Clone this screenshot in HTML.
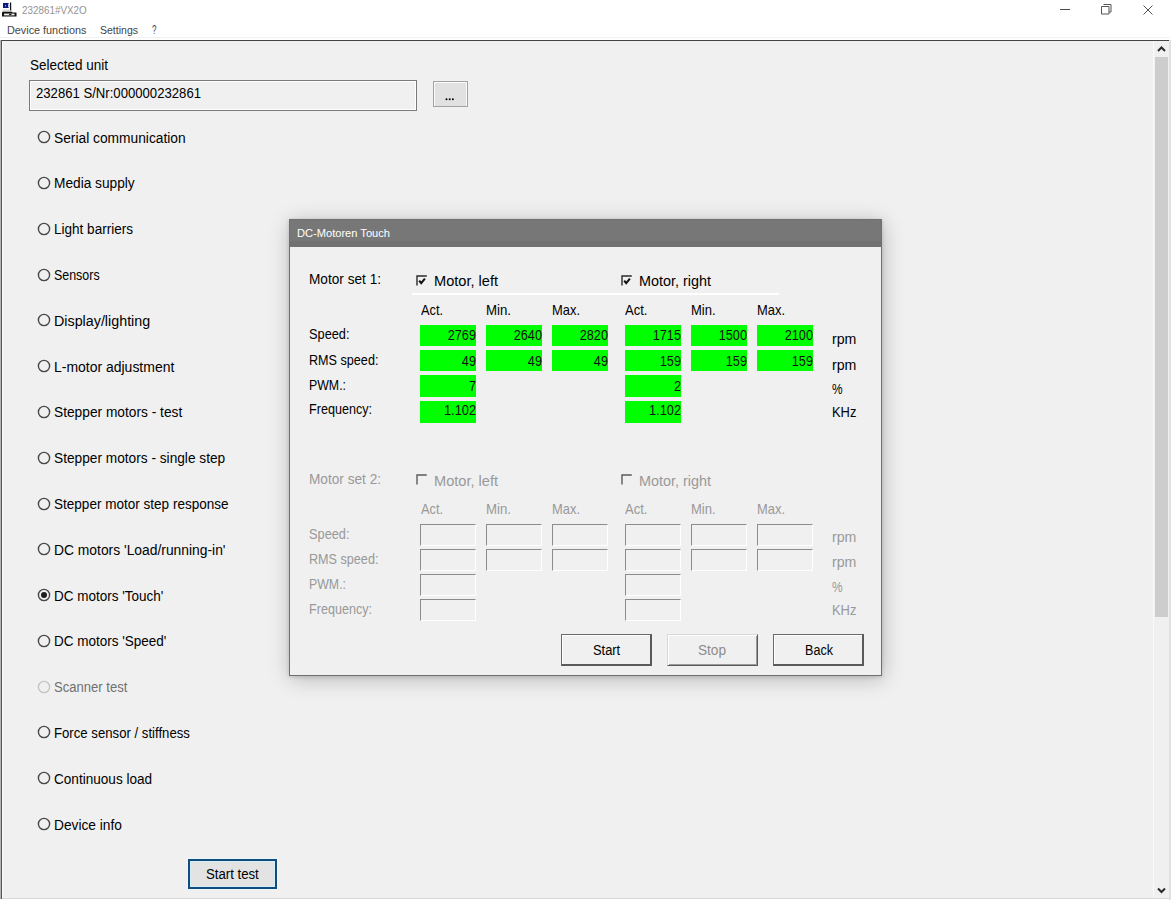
<!DOCTYPE html>
<html><head><meta charset="utf-8">
<style>
html,body{margin:0;padding:0;width:1171px;height:900px;overflow:hidden;background:#fff;}
body{position:relative;font-family:"Liberation Sans",sans-serif;}
.t{position:absolute;white-space:nowrap;display:block;}
.a{position:absolute;box-sizing:border-box;}
</style></head><body>
<!-- title bar -->
<svg class="a" style="left:0px;top:0px" width="20" height="20" viewBox="0 0 20 20">
  <rect x="3" y="3" width="6" height="5" fill="#0b1a7a"/>
  <rect x="5" y="5" width="1" height="1.5" fill="#8a96e0"/>
  <rect x="8" y="3.5" width="1.5" height="4" fill="#b8c0f0"/>
  <rect x="10" y="2.5" width="1.2" height="9" fill="#111"/>
  <path d="M2.5 9.5L10 9.5L11.5 12L2.5 12Z" fill="#d8d8d0"/>
  <rect x="2.3" y="11.8" width="10" height="1.2" fill="#111"/>
  <rect x="2" y="12.5" width="14.5" height="4" fill="#111"/>
  <rect x="4" y="13.6" width="10.5" height="1.8" fill="#f2f2f2"/>
  <rect x="9" y="13.8" width="2.5" height="1.3" fill="#222"/>
</svg>
<svg class="a" style="left:1059px;top:4px" width="16" height="12"><line x1="1" y1="5.5" x2="11" y2="5.5" stroke="#4a4a4a" stroke-width="1"/></svg>
<svg class="a" style="left:1101px;top:4px" width="12" height="12"><path d="M2.5 0.5h7.5v7.5h-2 M0.5 2.5h7.5v7.5h-7.5z" fill="none" stroke="#555" stroke-width="1"/></svg>
<svg class="a" style="left:1143px;top:4.5px" width="10" height="10"><path d="M0.5 0.5L9.5 9.5M9.5 0.5L0.5 9.5" stroke="#555" stroke-width="1"/></svg>

<!-- client -->
<div class="a" style="left:0;top:40px;width:1171px;height:860px;background:#f0f0f0;"></div>
<div class="a" style="left:0;top:40px;width:1170px;height:1px;background:#444;"></div><div class="a" style="left:0;top:37px;width:1170px;height:1px;background:#f2f2f2;"></div>
<div class="a" style="left:1px;top:40px;width:1px;height:859px;background:#555;"></div><div class="a" style="left:0px;top:40px;width:1px;height:859px;background:#b4b4b4;"></div><div class="a" style="left:2px;top:41px;width:1px;height:857px;background:#fbfbfb;"></div>
<div class="a" style="left:2px;top:898px;width:1167px;height:1px;background:#d9d9d9;"></div><div class="a" style="left:0;top:899px;width:1171px;height:1px;background:#fff;"></div>
<div class="a" style="left:1169px;top:40px;width:2px;height:860px;background:#e0e0e0;"></div>
<!-- scrollbar -->
<div class="a" style="left:1153px;top:41px;width:1px;height:856px;background:#fafafa;"></div>

<div class="a" style="left:1155px;top:57px;width:13px;height:560px;background:#cdcdcd;"></div>
<svg class="a" style="left:1157px;top:45px" width="9" height="8"><path d="M1 6L4.5 2.5L8 6" fill="none" stroke="#2a2a2a" stroke-width="2"/></svg>
<svg class="a" style="left:1157px;top:886px" width="9" height="8"><path d="M1 2.5L4.5 6L8 2.5" fill="none" stroke="#2a2a2a" stroke-width="2"/></svg>

<!-- selected unit textbox -->
<div class="a" style="left:29px;top:80px;width:388px;height:31px;border:1px solid #7a7a7a;background:#f0f0f0;box-shadow:inset 1px 1px 0 #fff,inset -1px -1px 0 #fff;"></div>
<div class="a" style="left:433px;top:81px;width:35px;height:26px;border:1px solid #a2a2a2;background:#e1e1e1;box-shadow:inset 1px 1px 0 #fbfbfb,inset -1px 0 0 #fbfbfb;"></div>
<svg class="a" style="left:444px;top:96px" width="12" height="6"><circle cx="2.5" cy="3.2" r="1" fill="#000"/><circle cx="5.7" cy="3.2" r="1" fill="#000"/><circle cx="8.9" cy="3.2" r="1" fill="#000"/></svg>

<!-- radios -->
<svg class="a" style="left:37.4px;top:130.3px" width="14" height="14"><circle cx="7" cy="7" r="5.6" fill="none" stroke="#484848" stroke-width="1.4"/></svg>
<svg class="a" style="left:37.4px;top:176.1px" width="14" height="14"><circle cx="7" cy="7" r="5.6" fill="none" stroke="#484848" stroke-width="1.4"/></svg>
<svg class="a" style="left:37.4px;top:221.8px" width="14" height="14"><circle cx="7" cy="7" r="5.6" fill="none" stroke="#484848" stroke-width="1.4"/></svg>
<svg class="a" style="left:37.4px;top:267.6px" width="14" height="14"><circle cx="7" cy="7" r="5.6" fill="none" stroke="#484848" stroke-width="1.4"/></svg>
<svg class="a" style="left:37.4px;top:313.4px" width="14" height="14"><circle cx="7" cy="7" r="5.6" fill="none" stroke="#484848" stroke-width="1.4"/></svg>
<svg class="a" style="left:37.4px;top:359.2px" width="14" height="14"><circle cx="7" cy="7" r="5.6" fill="none" stroke="#484848" stroke-width="1.4"/></svg>
<svg class="a" style="left:37.4px;top:404.9px" width="14" height="14"><circle cx="7" cy="7" r="5.6" fill="none" stroke="#484848" stroke-width="1.4"/></svg>
<svg class="a" style="left:37.4px;top:450.7px" width="14" height="14"><circle cx="7" cy="7" r="5.6" fill="none" stroke="#484848" stroke-width="1.4"/></svg>
<svg class="a" style="left:37.4px;top:496.5px" width="14" height="14"><circle cx="7" cy="7" r="5.6" fill="none" stroke="#484848" stroke-width="1.4"/></svg>
<svg class="a" style="left:37.4px;top:542.2px" width="14" height="14"><circle cx="7" cy="7" r="5.6" fill="none" stroke="#484848" stroke-width="1.4"/></svg>
<svg class="a" style="left:37.4px;top:588.0px" width="14" height="14"><circle cx="7" cy="7" r="5.6" fill="none" stroke="#484848" stroke-width="1.4"/><circle cx="7" cy="7" r="3" fill="#1e1e1e"/></svg>
<svg class="a" style="left:37.4px;top:633.8px" width="14" height="14"><circle cx="7" cy="7" r="5.6" fill="none" stroke="#484848" stroke-width="1.4"/></svg>
<svg class="a" style="left:37.4px;top:679.5px" width="14" height="14"><circle cx="7" cy="7" r="5.6" fill="none" stroke="#c4c4c4" stroke-width="1.4"/></svg>
<svg class="a" style="left:37.4px;top:725.3px" width="14" height="14"><circle cx="7" cy="7" r="5.6" fill="none" stroke="#484848" stroke-width="1.4"/></svg>
<svg class="a" style="left:37.4px;top:771.1px" width="14" height="14"><circle cx="7" cy="7" r="5.6" fill="none" stroke="#484848" stroke-width="1.4"/></svg>
<svg class="a" style="left:37.4px;top:816.9px" width="14" height="14"><circle cx="7" cy="7" r="5.6" fill="none" stroke="#484848" stroke-width="1.4"/></svg>

<!-- start test button -->
<div class="a" style="left:188px;top:859px;width:89px;height:30px;border:2px solid #124b7c;background:#e3e3e3;box-shadow:inset 0 0 0 1px #d2f0fc,0 0 0 1px #e8f8ff;"></div>

<!-- dialog shadow -->
<div class="a" style="left:289px;top:219px;width:593px;height:457px;box-shadow:0 1px 4px rgba(0,0,0,0.15),1px 3px 20px rgba(0,0,0,0.23);"></div>
<div class="a" style="left:289px;top:219px;width:593px;height:457px;background:#f0f0f0;border:1px solid #707070;"></div>
<div class="a" style="left:290px;top:220px;width:591px;height:27px;background:#777777;"></div><div class="a" style="left:290px;top:241px;width:591px;height:6px;background:#717171;"></div>

<div class="a" style="left:412px;top:293px;width:367px;height:2px;background:#fff;"></div>
<svg class="a" style="left:416px;top:275px" width="12" height="12"><path d="M1 10.5V1H10.8" fill="none" stroke="#2a2a2a" stroke-width="1.4"/><path d="M3.2 5.6L5.2 8.2L8.9 3.6" fill="none" stroke="#111" stroke-width="2"/></svg>
<svg class="a" style="left:621px;top:275px" width="12" height="12"><path d="M1 10.5V1H10.8" fill="none" stroke="#2a2a2a" stroke-width="1.4"/><path d="M3.2 5.6L5.2 8.2L8.9 3.6" fill="none" stroke="#111" stroke-width="2"/></svg>
<div class="a" style="left:420px;top:325px;width:56px;height:21px;background:#00ff00;"></div>
<div class="a" style="left:420px;top:350px;width:56px;height:21px;background:#00ff00;"></div>
<div class="a" style="left:420px;top:375px;width:56px;height:22px;background:#00ff00;"></div>
<div class="a" style="left:420px;top:401px;width:56px;height:21.5px;background:#00ff00;"></div>
<div class="a" style="left:486px;top:325px;width:56px;height:21px;background:#00ff00;"></div>
<div class="a" style="left:486px;top:350px;width:56px;height:21px;background:#00ff00;"></div>
<div class="a" style="left:552px;top:325px;width:56px;height:21px;background:#00ff00;"></div>
<div class="a" style="left:552px;top:350px;width:56px;height:21px;background:#00ff00;"></div>
<div class="a" style="left:625px;top:325px;width:56px;height:21px;background:#00ff00;"></div>
<div class="a" style="left:625px;top:350px;width:56px;height:21px;background:#00ff00;"></div>
<div class="a" style="left:625px;top:375px;width:56px;height:22px;background:#00ff00;"></div>
<div class="a" style="left:625px;top:401px;width:56px;height:21.5px;background:#00ff00;"></div>
<div class="a" style="left:691px;top:325px;width:56px;height:21px;background:#00ff00;"></div>
<div class="a" style="left:691px;top:350px;width:56px;height:21px;background:#00ff00;"></div>
<div class="a" style="left:757px;top:325px;width:56px;height:21px;background:#00ff00;"></div>
<div class="a" style="left:757px;top:350px;width:56px;height:21px;background:#00ff00;"></div>
<svg class="a" style="left:416px;top:473.5px" width="12" height="12"><path d="M1 10.5V1H10.8" fill="none" stroke="#5a5a5a" stroke-width="1.4"/></svg>
<svg class="a" style="left:621px;top:473.5px" width="12" height="12"><path d="M1 10.5V1H10.8" fill="none" stroke="#5a5a5a" stroke-width="1.4"/></svg>
<div class="a" style="left:420px;top:524px;width:56px;height:22px;border-top:1px solid #8c8c8c;border-left:1px solid #8c8c8c;border-right:1px solid #fff;border-bottom:1px solid #fff;"></div>
<div class="a" style="left:420px;top:549px;width:56px;height:22px;border-top:1px solid #8c8c8c;border-left:1px solid #8c8c8c;border-right:1px solid #fff;border-bottom:1px solid #fff;"></div>
<div class="a" style="left:420px;top:574px;width:56px;height:22px;border-top:1px solid #8c8c8c;border-left:1px solid #8c8c8c;border-right:1px solid #fff;border-bottom:1px solid #fff;"></div>
<div class="a" style="left:420px;top:599px;width:56px;height:22px;border-top:1px solid #8c8c8c;border-left:1px solid #8c8c8c;border-right:1px solid #fff;border-bottom:1px solid #fff;"></div>
<div class="a" style="left:486px;top:524px;width:56px;height:22px;border-top:1px solid #8c8c8c;border-left:1px solid #8c8c8c;border-right:1px solid #fff;border-bottom:1px solid #fff;"></div>
<div class="a" style="left:486px;top:549px;width:56px;height:22px;border-top:1px solid #8c8c8c;border-left:1px solid #8c8c8c;border-right:1px solid #fff;border-bottom:1px solid #fff;"></div>
<div class="a" style="left:552px;top:524px;width:56px;height:22px;border-top:1px solid #8c8c8c;border-left:1px solid #8c8c8c;border-right:1px solid #fff;border-bottom:1px solid #fff;"></div>
<div class="a" style="left:552px;top:549px;width:56px;height:22px;border-top:1px solid #8c8c8c;border-left:1px solid #8c8c8c;border-right:1px solid #fff;border-bottom:1px solid #fff;"></div>
<div class="a" style="left:625px;top:524px;width:56px;height:22px;border-top:1px solid #8c8c8c;border-left:1px solid #8c8c8c;border-right:1px solid #fff;border-bottom:1px solid #fff;"></div>
<div class="a" style="left:625px;top:549px;width:56px;height:22px;border-top:1px solid #8c8c8c;border-left:1px solid #8c8c8c;border-right:1px solid #fff;border-bottom:1px solid #fff;"></div>
<div class="a" style="left:625px;top:574px;width:56px;height:22px;border-top:1px solid #8c8c8c;border-left:1px solid #8c8c8c;border-right:1px solid #fff;border-bottom:1px solid #fff;"></div>
<div class="a" style="left:625px;top:599px;width:56px;height:22px;border-top:1px solid #8c8c8c;border-left:1px solid #8c8c8c;border-right:1px solid #fff;border-bottom:1px solid #fff;"></div>
<div class="a" style="left:691px;top:524px;width:56px;height:22px;border-top:1px solid #8c8c8c;border-left:1px solid #8c8c8c;border-right:1px solid #fff;border-bottom:1px solid #fff;"></div>
<div class="a" style="left:691px;top:549px;width:56px;height:22px;border-top:1px solid #8c8c8c;border-left:1px solid #8c8c8c;border-right:1px solid #fff;border-bottom:1px solid #fff;"></div>
<div class="a" style="left:757px;top:524px;width:56px;height:22px;border-top:1px solid #8c8c8c;border-left:1px solid #8c8c8c;border-right:1px solid #fff;border-bottom:1px solid #fff;"></div>
<div class="a" style="left:757px;top:549px;width:56px;height:22px;border-top:1px solid #8c8c8c;border-left:1px solid #8c8c8c;border-right:1px solid #fff;border-bottom:1px solid #fff;"></div>
<div class="a" style="left:561px;top:634px;width:91px;height:32px;background:#f0f0f0;border-top:1px solid #6a6a6a;border-left:1px solid #6a6a6a;border-right:2px solid #5a5a5a;border-bottom:2px solid #5a5a5a;box-shadow:inset 1px 1px 0 #fff;"></div>
<div class="a" style="left:667px;top:634px;width:91px;height:32px;background:#f0f0f0;border-top:1px solid #d8d8d8;border-left:1px solid #d8d8d8;border-right:1px solid #5a5a5a;border-bottom:1px solid #5a5a5a;box-shadow:inset 1px 1px 0 #fff,inset -1px -1px 0 #9a9a9a;"></div>
<div class="a" style="left:773px;top:634px;width:91px;height:32px;background:#f0f0f0;border-top:1px solid #6a6a6a;border-left:1px solid #6a6a6a;border-right:2px solid #5a5a5a;border-bottom:2px solid #5a5a5a;box-shadow:inset 1px 1px 0 #fff;"></div>

<span id="t0" class="t" style="left:21.5px;transform-origin:left center;top:5.33px;font-size:11.3px;line-height:11.3px;color:#939393;transform:scaleX(0.8728);">232861#VX2O</span>
<span id="t1" class="t" style="left:7.3px;transform-origin:left center;top:24.57px;font-size:11.5px;line-height:11.5px;color:#444;transform:scaleX(0.9410);">Device functions</span>
<span id="t2" class="t" style="left:100.2px;transform-origin:left center;top:24.57px;font-size:11.5px;line-height:11.5px;color:#444;transform:scaleX(0.9143);">Settings</span>
<span id="t3" class="t" style="left:151.6px;transform-origin:left center;top:24.14px;font-size:12px;line-height:12px;color:#444;transform:scaleX(0.6729);">?</span>
<span id="t4" class="t" style="left:29.8px;transform-origin:left center;top:57.75px;font-size:14px;line-height:14px;color:#000;transform:scaleX(0.9635);">Selected unit</span>
<span id="t5" class="t" style="left:36.0px;transform-origin:left center;top:85.95px;font-size:14px;line-height:14px;color:#000;transform:scaleX(0.9378);">232861 S/Nr:000000232861</span>
<span id="t6" class="t" style="left:54.3px;transform-origin:left center;top:130.65px;font-size:14px;line-height:14px;color:#000;transform:scaleX(0.9840);">Serial communication</span>
<span id="t7" class="t" style="left:54.3px;transform-origin:left center;top:176.45px;font-size:14px;line-height:14px;color:#000;transform:scaleX(0.9782);">Media supply</span>
<span id="t8" class="t" style="left:54.3px;transform-origin:left center;top:222.25px;font-size:14px;line-height:14px;color:#000;transform:scaleX(0.9669);">Light barriers</span>
<span id="t9" class="t" style="left:54.3px;transform-origin:left center;top:268.05px;font-size:14px;line-height:14px;color:#000;transform:scaleX(0.8879);">Sensors</span>
<span id="t10" class="t" style="left:54.3px;transform-origin:left center;top:313.85px;font-size:14px;line-height:14px;color:#000;transform:scaleX(1.0215);">Display/lighting</span>
<span id="t11" class="t" style="left:54.3px;transform-origin:left center;top:359.65px;font-size:14px;line-height:14px;color:#000;transform:scaleX(0.9974);">L-motor adjustment</span>
<span id="t12" class="t" style="left:54.3px;transform-origin:left center;top:405.45px;font-size:14px;line-height:14px;color:#000;transform:scaleX(0.9807);">Stepper motors - test</span>
<span id="t13" class="t" style="left:54.3px;transform-origin:left center;top:451.25px;font-size:14px;line-height:14px;color:#000;transform:scaleX(0.9778);">Stepper motors - single step</span>
<span id="t14" class="t" style="left:54.3px;transform-origin:left center;top:497.05px;font-size:14px;line-height:14px;color:#000;transform:scaleX(0.9671);">Stepper motor step response</span>
<span id="t15" class="t" style="left:54.3px;transform-origin:left center;top:542.85px;font-size:14px;line-height:14px;color:#000;transform:scaleX(0.9888);">DC motors 'Load/running-in'</span>
<span id="t16" class="t" style="left:54.3px;transform-origin:left center;top:588.65px;font-size:14px;line-height:14px;color:#000;transform:scaleX(0.9630);">DC motors 'Touch'</span>
<span id="t17" class="t" style="left:54.3px;transform-origin:left center;top:634.45px;font-size:14px;line-height:14px;color:#000;transform:scaleX(0.9638);">DC motors 'Speed'</span>
<span id="t18" class="t" style="left:54.3px;transform-origin:left center;top:680.25px;font-size:14px;line-height:14px;color:#707070;transform:scaleX(0.9325);">Scanner test</span>
<span id="t19" class="t" style="left:54.3px;transform-origin:left center;top:726.05px;font-size:14px;line-height:14px;color:#000;transform:scaleX(0.9407);">Force sensor / stiffness</span>
<span id="t20" class="t" style="left:54.3px;transform-origin:left center;top:771.85px;font-size:14px;line-height:14px;color:#000;transform:scaleX(0.9695);">Continuous load</span>
<span id="t21" class="t" style="left:54.3px;transform-origin:left center;top:817.65px;font-size:14px;line-height:14px;color:#000;transform:scaleX(0.9803);">Device info</span>
<span id="t22" class="t" style="left:205.8px;transform-origin:left center;top:867.05px;font-size:14px;line-height:14px;color:#000;transform:scaleX(0.9423);">Start test</span>
<span id="t23" class="t" style="left:297.4px;transform-origin:left center;top:228.43px;font-size:11.3px;line-height:11.3px;color:#fff;transform:scaleX(0.9830);">DC-Motoren Touch</span>
<span id="t24" class="t" style="left:309px;transform-origin:left center;top:272.41px;font-size:14.4px;line-height:14.4px;color:#000;transform:scaleX(0.9476);">Motor set 1:</span>
<span id="t25" class="t" style="left:434.2px;transform-origin:left center;top:273.98px;font-size:14.2px;line-height:14.2px;color:#000;transform:scaleX(1.0273);">Motor, left</span>
<span id="t26" class="t" style="left:638.8px;transform-origin:left center;top:273.98px;font-size:14.2px;line-height:14.2px;color:#000;transform:scaleX(1.0145);">Motor, right</span>
<span id="t27" class="t" style="left:420.5px;transform-origin:left center;top:302.58px;font-size:14.2px;line-height:14.2px;color:#000;transform:scaleX(0.8997);">Act.</span>
<span id="t28" class="t" style="left:486.3px;transform-origin:left center;top:302.58px;font-size:14.2px;line-height:14.2px;color:#000;transform:scaleX(0.9324);">Min.</span>
<span id="t29" class="t" style="left:552.3px;transform-origin:left center;top:302.58px;font-size:14.2px;line-height:14.2px;color:#000;transform:scaleX(0.9106);">Max.</span>
<span id="t30" class="t" style="left:625px;transform-origin:left center;top:302.58px;font-size:14.2px;line-height:14.2px;color:#000;transform:scaleX(0.9201);">Act.</span>
<span id="t31" class="t" style="left:691.2px;transform-origin:left center;top:302.58px;font-size:14.2px;line-height:14.2px;color:#000;transform:scaleX(0.9175);">Min.</span>
<span id="t32" class="t" style="left:756.9px;transform-origin:left center;top:302.58px;font-size:14.2px;line-height:14.2px;color:#000;transform:scaleX(0.9106);">Max.</span>
<span id="t33" class="t" style="left:309px;transform-origin:left center;top:327.48px;font-size:14.2px;line-height:14.2px;color:#000;transform:scaleX(0.9006);">Speed:</span>
<span id="t34" class="t" style="left:309px;transform-origin:left center;top:352.78px;font-size:14.2px;line-height:14.2px;color:#000;transform:scaleX(0.8889);">RMS speed:</span>
<span id="t35" class="t" style="left:309px;transform-origin:left center;top:377.78px;font-size:14.2px;line-height:14.2px;color:#000;transform:scaleX(0.8693);">PWM.:</span>
<span id="t36" class="t" style="left:309px;transform-origin:left center;top:402.28px;font-size:14.2px;line-height:14.2px;color:#000;transform:scaleX(0.8875);">Frequency:</span>
<span id="t37" class="t" style="left:831.5px;transform-origin:left center;top:332.48px;font-size:14.2px;line-height:14.2px;color:#000;transform:scaleX(0.9985);">rpm</span>
<span id="t38" class="t" style="left:831.5px;transform-origin:left center;top:357.98px;font-size:14.2px;line-height:14.2px;color:#000;transform:scaleX(0.9985);">rpm</span>
<span id="t39" class="t" style="left:831.5px;transform-origin:left center;top:381.30px;font-size:15px;line-height:15px;color:#000;transform:scaleX(0.7944);">%</span>
<span id="t40" class="t" style="left:831.5px;transform-origin:left center;top:405.28px;font-size:14.2px;line-height:14.2px;color:#000;transform:scaleX(0.9100);">KHz</span>
<span id="t41" class="t" style="left:309px;transform-origin:left center;top:471.71px;font-size:14.4px;line-height:14.4px;color:#999999;transform:scaleX(0.9476);">Motor set 2:</span>
<span id="t42" class="t" style="left:434.2px;transform-origin:left center;top:473.98px;font-size:14.2px;line-height:14.2px;color:#999999;transform:scaleX(1.0273);">Motor, left</span>
<span id="t43" class="t" style="left:638.8px;transform-origin:left center;top:473.98px;font-size:14.2px;line-height:14.2px;color:#999999;transform:scaleX(1.0145);">Motor, right</span>
<span id="t44" class="t" style="left:420.5px;transform-origin:left center;top:501.88px;font-size:14.2px;line-height:14.2px;color:#999999;transform:scaleX(0.8997);">Act.</span>
<span id="t45" class="t" style="left:486.3px;transform-origin:left center;top:501.88px;font-size:14.2px;line-height:14.2px;color:#999999;transform:scaleX(0.9324);">Min.</span>
<span id="t46" class="t" style="left:552.3px;transform-origin:left center;top:501.88px;font-size:14.2px;line-height:14.2px;color:#999999;transform:scaleX(0.9106);">Max.</span>
<span id="t47" class="t" style="left:625px;transform-origin:left center;top:501.88px;font-size:14.2px;line-height:14.2px;color:#999999;transform:scaleX(0.9201);">Act.</span>
<span id="t48" class="t" style="left:691.2px;transform-origin:left center;top:501.88px;font-size:14.2px;line-height:14.2px;color:#999999;transform:scaleX(0.9175);">Min.</span>
<span id="t49" class="t" style="left:756.9px;transform-origin:left center;top:501.88px;font-size:14.2px;line-height:14.2px;color:#999999;transform:scaleX(0.9106);">Max.</span>
<span id="t50" class="t" style="left:309px;transform-origin:left center;top:526.78px;font-size:14.2px;line-height:14.2px;color:#999999;transform:scaleX(0.9006);">Speed:</span>
<span id="t51" class="t" style="left:309px;transform-origin:left center;top:552.08px;font-size:14.2px;line-height:14.2px;color:#999999;transform:scaleX(0.8889);">RMS speed:</span>
<span id="t52" class="t" style="left:309px;transform-origin:left center;top:577.08px;font-size:14.2px;line-height:14.2px;color:#999999;transform:scaleX(0.8693);">PWM.:</span>
<span id="t53" class="t" style="left:309px;transform-origin:left center;top:601.58px;font-size:14.2px;line-height:14.2px;color:#999999;transform:scaleX(0.8875);">Frequency:</span>
<span id="t54" class="t" style="left:831.5px;transform-origin:left center;top:529.98px;font-size:14.2px;line-height:14.2px;color:#999999;transform:scaleX(0.9985);">rpm</span>
<span id="t55" class="t" style="left:831.5px;transform-origin:left center;top:555.48px;font-size:14.2px;line-height:14.2px;color:#999999;transform:scaleX(0.9985);">rpm</span>
<span id="t56" class="t" style="left:831.5px;transform-origin:left center;top:578.80px;font-size:15px;line-height:15px;color:#999999;transform:scaleX(0.7944);">%</span>
<span id="t57" class="t" style="left:831.5px;transform-origin:left center;top:602.78px;font-size:14.2px;line-height:14.2px;color:#999999;transform:scaleX(0.9100);">KHz</span>
<span id="t58" class="t" style="left:75.80000000000001px;width:400px;text-align:right;transform-origin:right center;top:328.05px;font-size:14px;line-height:14px;color:#111;transform:scaleX(0.9090);">2769</span>
<span id="t59" class="t" style="left:141.79999999999995px;width:400px;text-align:right;transform-origin:right center;top:328.05px;font-size:14px;line-height:14px;color:#111;transform:scaleX(0.9090);">2640</span>
<span id="t60" class="t" style="left:207.79999999999995px;width:400px;text-align:right;transform-origin:right center;top:328.05px;font-size:14px;line-height:14px;color:#111;transform:scaleX(0.9090);">2820</span>
<span id="t61" class="t" style="left:280.79999999999995px;width:400px;text-align:right;transform-origin:right center;top:328.05px;font-size:14px;line-height:14px;color:#111;transform:scaleX(0.9090);">1715</span>
<span id="t62" class="t" style="left:346.79999999999995px;width:400px;text-align:right;transform-origin:right center;top:328.05px;font-size:14px;line-height:14px;color:#111;transform:scaleX(0.9090);">1500</span>
<span id="t63" class="t" style="left:412.79999999999995px;width:400px;text-align:right;transform-origin:right center;top:328.05px;font-size:14px;line-height:14px;color:#111;transform:scaleX(0.9090);">2100</span>
<span id="t64" class="t" style="left:75.80000000000001px;width:400px;text-align:right;transform-origin:right center;top:353.65px;font-size:14px;line-height:14px;color:#111;transform:scaleX(0.9090);">49</span>
<span id="t65" class="t" style="left:141.79999999999995px;width:400px;text-align:right;transform-origin:right center;top:353.65px;font-size:14px;line-height:14px;color:#111;transform:scaleX(0.9090);">49</span>
<span id="t66" class="t" style="left:207.79999999999995px;width:400px;text-align:right;transform-origin:right center;top:353.65px;font-size:14px;line-height:14px;color:#111;transform:scaleX(0.9090);">49</span>
<span id="t67" class="t" style="left:280.79999999999995px;width:400px;text-align:right;transform-origin:right center;top:353.65px;font-size:14px;line-height:14px;color:#111;transform:scaleX(0.9093);">159</span>
<span id="t68" class="t" style="left:346.79999999999995px;width:400px;text-align:right;transform-origin:right center;top:353.65px;font-size:14px;line-height:14px;color:#111;transform:scaleX(0.9093);">159</span>
<span id="t69" class="t" style="left:412.79999999999995px;width:400px;text-align:right;transform-origin:right center;top:353.65px;font-size:14px;line-height:14px;color:#111;transform:scaleX(0.9093);">159</span>
<span id="t70" class="t" style="left:75.80000000000001px;width:400px;text-align:right;transform-origin:right center;top:378.95px;font-size:14px;line-height:14px;color:#111;transform:scaleX(0.9081);">7</span>
<span id="t71" class="t" style="left:280.79999999999995px;width:400px;text-align:right;transform-origin:right center;top:378.95px;font-size:14px;line-height:14px;color:#111;transform:scaleX(0.9081);">2</span>
<span id="t72" class="t" style="left:75.80000000000001px;width:400px;text-align:right;transform-origin:right center;top:403.35px;font-size:14px;line-height:14px;color:#111;transform:scaleX(0.9131);">1.102</span>
<span id="t73" class="t" style="left:280.79999999999995px;width:400px;text-align:right;transform-origin:right center;top:403.35px;font-size:14px;line-height:14px;color:#111;transform:scaleX(0.9131);">1.102</span>
<span id="t74" class="t" style="left:592.8px;transform-origin:left center;top:642.95px;font-size:14px;line-height:14px;color:#000;transform:scaleX(0.9196);">Start</span>
<span id="t75" class="t" style="left:698.2px;transform-origin:left center;top:642.95px;font-size:14px;line-height:14px;color:#8c8c8c;transform:scaleX(0.9718);">Stop</span>
<span id="t76" class="t" style="left:804.9px;transform-origin:left center;top:642.95px;font-size:14px;line-height:14px;color:#000;transform:scaleX(0.8996);">Back</span>
</body></html>
